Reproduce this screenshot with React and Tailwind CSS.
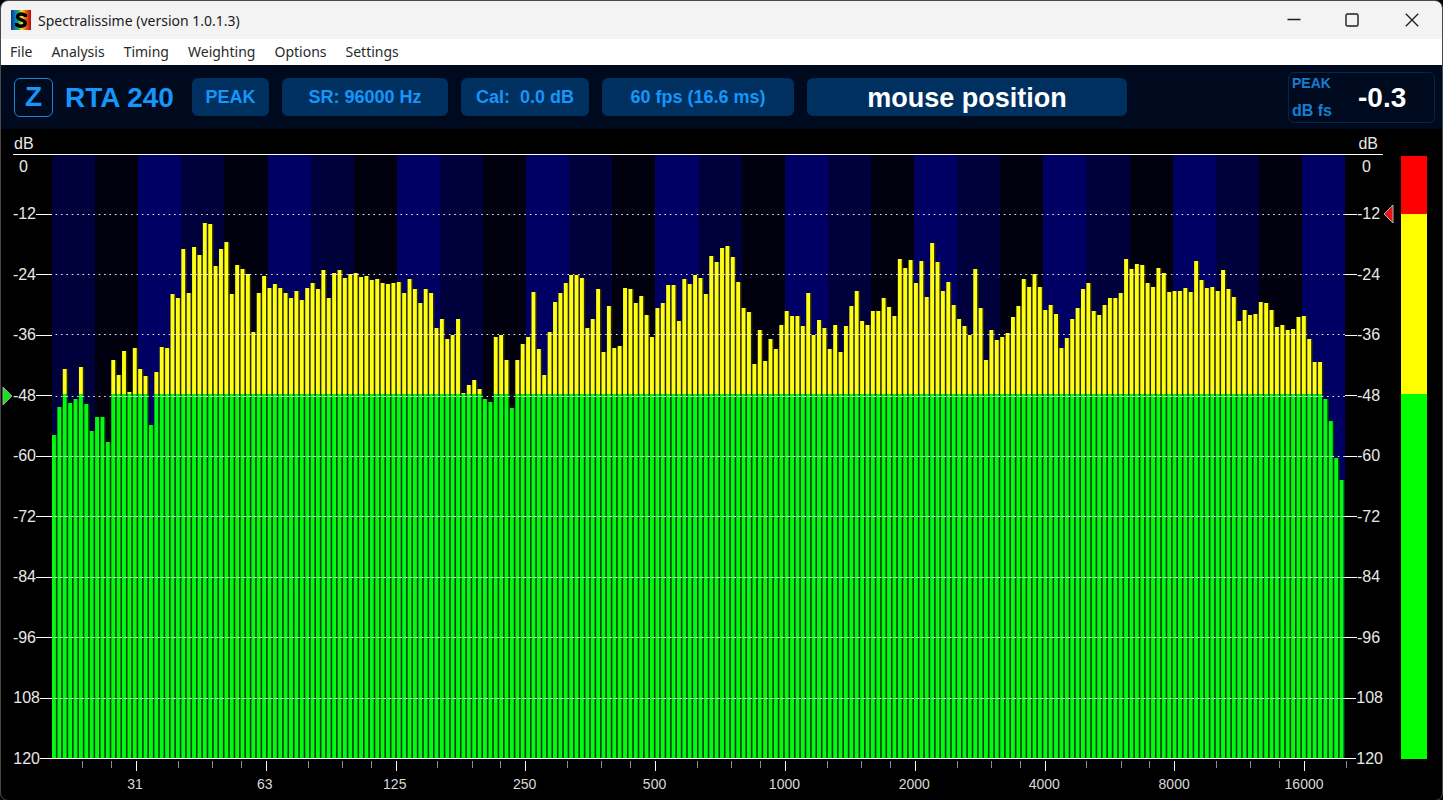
import React from "react";

const TOP = 155;
const BARS = [
  706, 621, 506, 609, 598, 502, 613, 694, 652, 652, 725, 479, 525, 452, 575, 444, 506, 529, 675, 517, 440, 444, 283, 295,
  148, 279, 141, 164, 68, 72, 199, 148, 126, 283, 195, 207, 222, 395, 279, 229, 264, 252, 264, 279, 295, 272, 299, 264,
  249, 268, 210, 295, 218, 210, 233, 222, 218, 230, 227, 241, 237, 249, 252, 249, 245, 279, 237, 268, 310, 268, 279, 383,
  356, 418, 406, 356, 579, 556, 541, 567, 598, 606, 410, 404, 479, 625, 479, 433, 410, 276, 448, 525, 395, 306, 279, 249,
  226, 226, 233, 383, 356, 268, 456, 318, 444, 437, 264, 268, 310, 287, 345, 410, 325, 310, 256, 256, 364, 237, 252, 226,
  233, 283, 168, 187, 145, 137, 172, 245, 325, 337, 491, 391, 483, 418, 448, 376, 333, 349, 349, 379, 279, 406, 360, 383,
  448, 376, 456, 379, 318, 272, 364, 376, 333, 333, 295, 322, 349, 176, 203, 180, 249, 183, 291, 130, 187, 272, 245, 314,
  356, 379, 406, 207, 325, 479, 391, 421, 410, 399, 352, 318, 237, 260, 222, 260, 329, 314, 341, 444, 414, 356, 325, 268,
  249, 333, 345, 314, 295, 295, 279, 176, 207, 191, 195, 249, 260, 203, 218, 276, 272, 272, 264, 276, 183, 241, 264, 260,
  272, 210, 268, 291, 364, 329, 345, 341, 306, 310, 329, 380, 376, 391, 387, 352, 349, 418, 487, 487, 598, 663, 775, 840,
].map((v) => 200 + Math.round(v / 3) - TOP);

const W = 1293;
const H = 604;
const SPLIT = 239;
const STEP = W / BARS.length;
const BAR = 3.9;
const BANDS = ["#00003c", "#00000f", "#000064"];
const LINES = [59, 119, 179, 241, 301, 361, 422, 482, 543];
const OCTAVE = 129.8;
const MINOR = [1.25, 1.5, 1.75];
const MENUS = ["File", "Analysis", "Timing", "Weighting", "Options", "Settings"];
const LEVELS = ["-12", "-24", "-36", "-48", "-60", "-72", "-84", "-96", "108", "120"];
const FREQS = ["31", "63", "125", "250", "500", "1000", "2000", "4000", "8000", "16000"];

function Logo() {
  return (
    <svg className="h-5 w-5" viewBox="0 0 20 20" aria-hidden="true">
      <defs>
        <linearGradient id="spectrum" x1="0" x2="1" y1="0" y2="0">
          <stop offset="0" stopColor="#0a3282" />
          <stop offset="0.2" stopColor="#0c78be" />
          <stop offset="0.36" stopColor="#32a064" />
          <stop offset="0.54" stopColor="#f0e632" />
          <stop offset="0.74" stopColor="#f05a1c" />
          <stop offset="1" stopColor="#aa0a0a" />
        </linearGradient>
      </defs>
      <rect width="20" height="20" fill="url(#spectrum)" />
      <path
        d="M14.300 7V5.400C13.200 4.500 11.600 4 10.200 4 7.800 4 6.600 5.200 6.600 6.700c0 3.900 7.600 2.300 7.600 6.400 0 1.900-1.700 3.100-4.200 3.100-1.600 0-3.200-.5-4.400-1.300v-2"
        fill="none"
        stroke="#000"
        strokeWidth="3.400"
      />
    </svg>
  );
}

function Spectrum() {
  return (
    <svg className="block h-full w-full" viewBox={`0 0 ${W} ${H}`} preserveAspectRatio="none" role="img" aria-label="Real time spectrum">
      <g shapeRendering="crispEdges">
        {Array.from({ length: 30 }, (_, i) => (
          <rect key={i} x={Math.round((i * W) / 30)} y="0" width="44" height={H} fill={BANDS[i % 3]} />
        ))}
      </g>
      {BARS.map((y, i) => {
        const x = i * STEP;
        const low = Math.max(y, SPLIT);
        return (
          <g key={i}>
            {y < SPLIT && <rect x={x + BAR} y={y} width={STEP - BAR} height={SPLIT - y} fill="#282800" />}
            <rect x={x + BAR} y={low} width={STEP - BAR} height={H - low} fill="#003c00" />
            {y < SPLIT && <rect x={x} y={y} width={BAR} height={SPLIT - y} fill="#ffff14" />}
            <rect x={x} y={low} width={BAR} height={H - low} fill="#05fa12" />
            {LINES.filter((l) => l >= y).map((l) => (
              <rect key={l} x={x + 1} y={l} width="3" height="1" fill={l < SPLIT ? "#ffff96" : "#96ff96"} />
            ))}
          </g>
        );
      })}
      {LINES.map((y) => (
        <line key={y} x1={BAR - 0.3} x2={W} y1={y + 0.5} y2={y + 0.5} stroke="#ebebeb" strokeWidth="1" strokeDasharray={`1.6 ${STEP - 1.6}`} />
      ))}
      <rect x="0" y={H - 1} width={W} height="1" fill="#fff" />
    </svg>
  );
}

function Scale({ right }) {
  return (
    <ul className="mt-[30px] -mb-[30px] flex flex-col text-base leading-5 text-[#e8e8e8]">
      {LEVELS.map((v) => (
        <li key={v} className={right ? "flex flex-1 items-center" : "flex flex-1 items-center justify-end"}>
          {right && <span className="h-px w-3 bg-white" />}
          <span>{v}</span>
          {!right && <span className={v[0] === "-" ? "h-px w-4 bg-white" : "h-px w-3 bg-white"} />}
        </li>
      ))}
    </ul>
  );
}

function Ticks() {
  const marks = [];
  for (let o = -1; o < 10; o++) {
    if (o >= 0) marks.push([84 + o * OCTAVE, true]);
    MINOR.forEach((m) => marks.push([84 + (o + Math.log2(m)) * OCTAVE, false]));
  }
  return (
    <svg className="block h-3 w-full overflow-visible" viewBox={`0 0 ${W} 12`} preserveAspectRatio="none" shapeRendering="crispEdges" aria-hidden="true">
      {marks
        .filter(([x]) => x > 10 && x < W + 4)
        .map(([x, major]) => (
          <rect key={x} x={Math.round(x)} y="2" width="1" height={major ? 10 : 7} fill={major ? "#fff" : "#8c8c8c"} />
        ))}
    </svg>
  );
}

const pill = "flex h-[38px] items-center justify-center rounded-md bg-[#003060] text-lg font-bold text-[#1496fa]";

export default function App() {
  return (
    <div className="bg-black">
      <div className="flex min-h-screen flex-col overflow-hidden rounded-lg border border-[#484848] bg-black font-['Liberation_Sans',Arial,sans-serif]">
        <header className="flex h-[38px] shrink-0 items-center bg-[#f3f3f3] pl-[10px] font-['Noto_Sans',sans-serif]">
          <Logo />
          <h1 className="ml-[7px] flex-1 pt-0.5 text-sm text-[#1c1c1c]">Spectralissime (version 1.0.1.3)</h1>
          <div className="flex h-full text-[#1c1c1c]">
            <button aria-label="Minimize" className="flex w-[58px] items-center justify-center">
              <svg className="h-3.5 w-3.5" viewBox="0 0 14 14" fill="none" stroke="currentColor" strokeWidth="1.300"><path d="M.5 6.500h13" /></svg>
            </button>
            <button aria-label="Maximize" className="flex w-[58px] items-center justify-center">
              <svg className="h-3.5 w-3.5" viewBox="0 0 14 14" fill="none" stroke="currentColor" strokeWidth="1.400"><rect x="1" y="1" width="12" height="12" rx="1.600" /></svg>
            </button>
            <button aria-label="Close" className="flex w-[61px] items-center justify-center">
              <svg className="h-3.5 w-3.5" viewBox="0 0 14 14" fill="none" stroke="currentColor" strokeWidth="1.300"><path d="m.8.8 12.400 12.400M13.200.8.8 13.200" /></svg>
            </button>
          </div>
        </header>
        <nav className="flex h-[26px] shrink-0 items-center gap-[19px] bg-white pl-[9px] font-['Noto_Sans',sans-serif] text-sm text-[#2a2a2a]">
          {MENUS.map((m) => (
            <button key={m}>{m}</button>
          ))}
        </nav>
        <section className="flex h-16 shrink-0 items-center bg-[#000a1e] pr-[7px] pl-[13px]">
          <button className="flex h-[39px] w-[39px] items-center justify-center rounded-md border border-[#1e82dc] text-[28px] font-bold text-[#1496fa]">Z</button>
          <h2 className="ml-3 w-[127px] pt-0.5 text-[28px] font-bold whitespace-nowrap text-[#1496fa]">RTA 240</h2>
          <div className="flex gap-[13px]">
            <button className={`${pill} w-[77px]`}>PEAK</button>
            <button className={`${pill} w-[166px]`}>SR: 96000 Hz</button>
            <button className={`${pill} w-[128px] whitespace-pre`}>{"Cal:  0.0 dB"}</button>
            <button className={`${pill} w-[192px]`}>60 fps (16.6 ms)</button>
            <output className="flex h-[38px] w-[320px] items-center justify-center rounded-md bg-[#003060] pt-0.5 text-[27px] font-bold text-white">mouse position</output>
          </div>
          <div className="ml-auto flex h-[51px] w-[147px] items-center rounded-md border border-[#00284f] pl-[3px]">
            <div className="flex w-[66px] flex-col gap-1.5 pt-0.5 font-bold text-[#147fd2]">
              <span className="text-sm leading-5">PEAK</span>
              <span className="text-base leading-6">dB fs</span>
            </div>
            <output className="pt-0.5 text-[28px] font-bold text-white">-0.3</output>
          </div>
        </section>
        <main className="flex flex-1 flex-col pb-1">
          <div className="flex h-[25px] shrink-0 items-end justify-between pr-16 pl-[13px] text-base leading-5 text-[#e8e8e8]">
            <span>dB</span>
            <span>dB</span>
          </div>
          <div className="flex flex-1">
            <div className="flex w-[51px] flex-col">
              <div className="-mb-6 ml-3 h-6 border-t border-white pt-0.5 pl-1.5 text-base leading-5 text-[#e8e8e8]">0</div>
              <div className="flex flex-1 flex-col *:flex-1">
                <Scale />
              </div>
            </div>
            <div className="flex min-w-0 flex-1 flex-col border-t border-white">
              <div className="h-0 min-h-[300px] flex-1">
                <Spectrum />
              </div>
            </div>
            <div className="flex w-[38px] flex-col">
              <div className="-mb-6 h-6 border-t border-white pt-0.5 pl-[17px] text-base leading-5 text-[#e8e8e8]">0</div>
              <div className="flex flex-1 flex-col *:flex-1">
                <Scale right />
              </div>
            </div>
            <div className="mt-0.5 mr-[15px] ml-[18px] flex w-[26px] flex-col" role="img" aria-label="Level meter">
              <div className="flex-[58] bg-[#ff0000]" />
              <div className="flex-[180] bg-[#ffff00]" />
              <div className="flex-[364] bg-[#00ff00]" />
            </div>
          </div>
          <div className="mr-[97px] ml-[51px] h-[37px] shrink-0">
            <Ticks />
            <ol className="-mr-6 ml-[18px] grid grid-cols-10 pt-[3px] text-center text-sm leading-5 text-[#d8d8d8]">
              {FREQS.map((f) => (
                <li key={f}>{f}</li>
              ))}
            </ol>
          </div>
        </main>
      </div>
      <svg className="absolute top-[386px] left-0.5 h-5 w-3" viewBox="0 0 12 20" role="img" aria-label="Lower threshold">
        <path d="M1 1v18l9-9z" fill="#14e614" stroke="#a0a0a0" />
      </svg>
      <svg className="absolute top-[204px] right-[49px] h-5 w-3" viewBox="0 0 12 20" role="img" aria-label="Upper threshold">
        <path d="M11 1v18l-9-9z" fill="#e61414" stroke="#b4b4b4" />
      </svg>
    </div>
  );
}
